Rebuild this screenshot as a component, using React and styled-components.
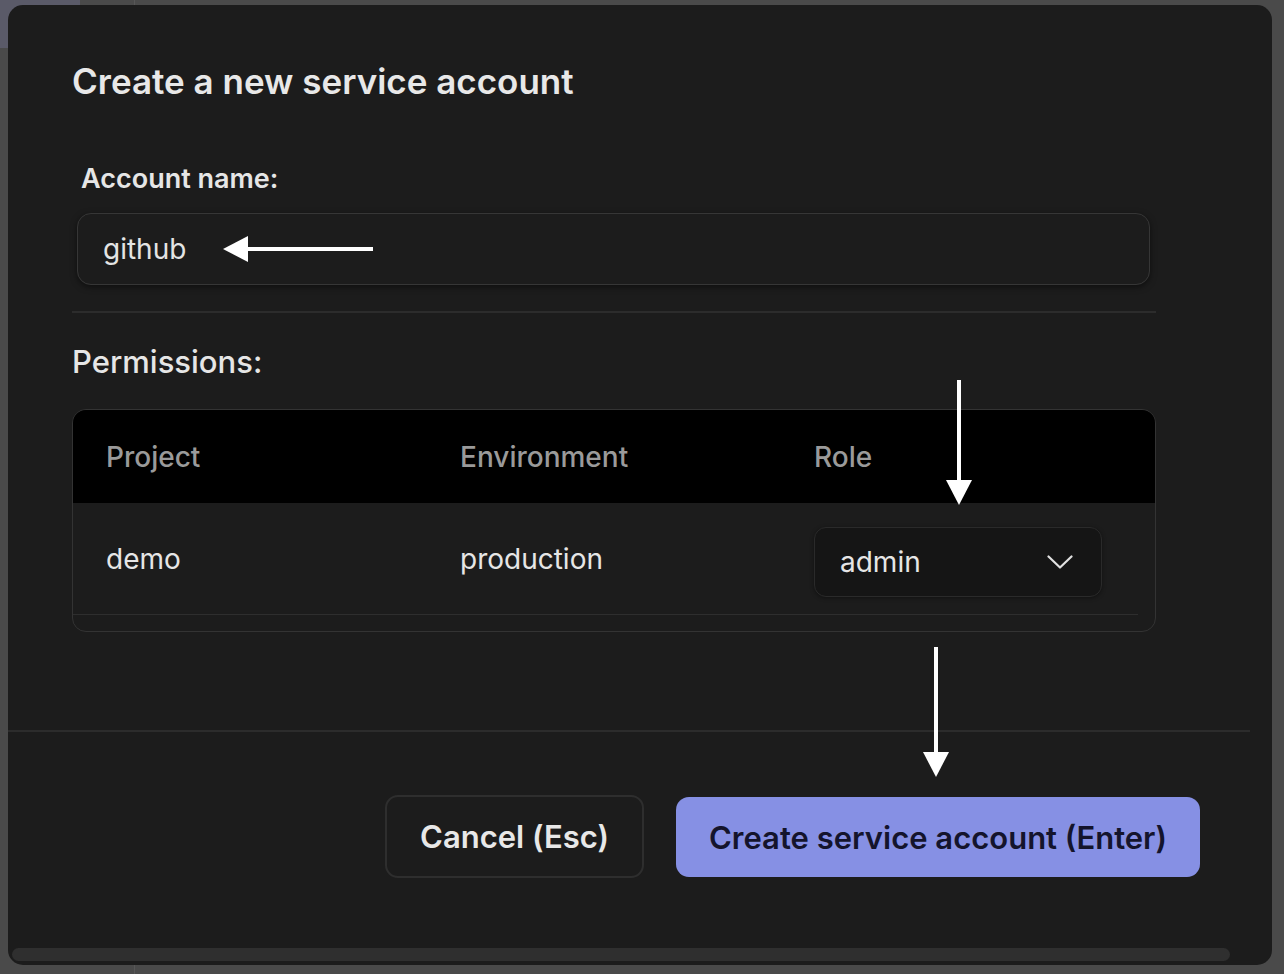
import React from 'react';
import styled, { createGlobalStyle } from 'styled-components';

const GlobalStyle = createGlobalStyle`
  html, body {
    margin: 0;
    padding: 0;
    background: #4a4a4a;
    font-family: Inter, "Noto Sans", sans-serif;
    overflow: hidden;
  }
`;

const Page = styled.div`
  display: flex;
  height: 974px;
  width: 1284px;
`;

const Sidebar = styled.div`
  width: 135px;
  border-right: 1px solid #575757;
  box-sizing: border-box;
`;

const SidebarItem = styled.div`
  width: 80px;
  height: 48px;
  background: #5a5a68;
`;

const Dialog = styled.div`
  position: fixed;
  left: 8px;
  top: 5px;
  width: 1264px;
  height: 960px;
  background: #1c1c1c;
  border-radius: 15px;
  display: flex;
  flex-direction: column;
  overflow: hidden;
`;

const Body = styled.div`
  padding: 56px 0 0 64px;
  width: 1084px;
  height: 669px;
`;

const Title = styled.h2`
  margin: 0;
  font-size: 35px;
  line-height: 40px;
  font-weight: 600;
  color: #e8e8e8;
`;

const Label = styled.div`
  margin: 63px 0 0 9px;
  font-size: 27px;
  line-height: 30px;
  font-weight: 600;
  color: #e6e6e6;
`;

const Input = styled.div`
  margin: 19px 6px 0 5px;
  height: 70px;
  border: 1px solid #363636;
  border-radius: 14px;
  box-shadow: 0 2px 6px rgba(0, 0, 0, 0.5);
  display: flex;
  align-items: center;
  padding-left: 25px;
  font-size: 28px;
  color: #e4e4e4;
`;

const Divider = styled.div`
  margin-top: 26px;
  height: 2px;
  background: #2c2c2c;
`;

const Section = styled.div`
  margin-top: 32px;
  font-size: 31px;
  line-height: 34px;
  font-weight: 500;
  color: #e6e6e6;
`;

const Table = styled.div`
  margin-top: 30px;
  border: 1px solid #333;
  border-radius: 14px;
  overflow: hidden;
  padding-bottom: 16px;
`;

const Row = styled.div`
  display: grid;
  grid-template-columns: 354px 354px 1fr;
  align-items: center;
  height: ${p => (p.$head ? '93px' : '111px')};
  padding-left: 33px;
  background: ${p => (p.$head ? '#000' : 'transparent')};
  border-bottom: ${p => (p.$head ? 'none' : '1px solid #2e2e2e')};
  margin-right: ${p => (p.$head ? '0' : '17px')};
  font-size: 28px;
  font-weight: ${p => (p.$head ? 500 : 400)};
  color: ${p => (p.$head ? '#9a9a9a' : '#e6e6e6')};
`;

const Select = styled.div`
  width: 288px;
  height: 70px;
  box-sizing: border-box;
  margin-top: 6px;
  background: #151515;
  border: 1px solid #2a2a2a;
  border-radius: 12px;
  box-shadow: 0 1px 4px rgba(0, 0, 0, 0.4);
  display: flex;
  align-items: center;
  justify-content: space-between;
  padding: 0 28px 0 25px;
  color: #e6e6e6;
`;

const Footer = styled.div`
  border-top: 2px solid #2c2c2c;
  width: 1242px;
  display: flex;
  justify-content: flex-end;
  padding: 63px 50px 0 0;
  box-sizing: border-box;
  gap: 32px;
  height: 218px;
`;

const Button = styled.div`
  height: ${p => (p.$primary ? '80px' : '83px')};
  margin-top: ${p => (p.$primary ? '2px' : '0')};
  padding: 0 33px;
  box-sizing: border-box;
  display: flex;
  align-items: center;
  border-radius: 13px;
  font-size: 31px;
  font-weight: 600;
  background: ${p => (p.$primary ? '#8690e4' : '#1c1c1c')};
  color: ${p => (p.$primary ? '#14142c' : '#e8e8e8')};
  border: ${p => (p.$primary ? 'none' : '2px solid #2e2e2e')};
`;

const Scrollbar = styled.div`
  margin: 0 42px 0 4px;
  height: 13px;
  border-radius: 7px;
  background: #2f2f2f;
`;

const Arrow = styled.svg`
  position: absolute;
  overflow: visible;
`;

function Chevron() {
  return (
    <svg width="26" height="14" viewBox="0 0 26 14">
      <path d="M1.5 1.5 L13 12.5 L24.5 1.5" fill="none" stroke="#e0e0e0" strokeWidth="2.2" strokeLinecap="round" strokeLinejoin="round" />
    </svg>
  );
}

function LeftArrow({ x, y, len }) {
  return (
    <Arrow style={{ left: x, top: y - 13 }} width={len} height="26">
      <rect x="22" y="11" width={len - 22} height="4" fill="#fff" />
      <polygon points="0,13 25,0 25,26" fill="#fff" />
    </Arrow>
  );
}

function DownArrow({ x, y, len }) {
  return (
    <Arrow style={{ left: x - 13, top: y }} width="26" height={len}>
      <rect x="11" y="0" width="4" height={len - 22} fill="#fff" />
      <polygon points={`0,${len - 25} 26,${len - 25} 13,${len}`} fill="#fff" />
    </Arrow>
  );
}

export default function App() {
  return (
    <>
      <GlobalStyle />
      <Page>
        <Sidebar>
          <SidebarItem />
        </Sidebar>
      </Page>
      <Dialog>
        <Body>
          <Title>Create a new service account</Title>
          <Label>Account name:</Label>
          <Input>github</Input>
          <Divider />
          <Section>Permissions:</Section>
          <Table>
            <Row $head>
              <span>Project</span>
              <span>Environment</span>
              <span>Role</span>
            </Row>
            <Row>
              <span>demo</span>
              <span>production</span>
              <Select>
                <span>admin</span>
                <Chevron />
              </Select>
            </Row>
          </Table>
        </Body>
        <Footer>
          <Button>Cancel (Esc)</Button>
          <Button $primary>Create service account (Enter)</Button>
        </Footer>
        <Scrollbar />
        <LeftArrow x={215} y={244} len={150} />
        <DownArrow x={951} y={375} len={125} />
        <DownArrow x={928} y={642} len={130} />
      </Dialog>
    </>
  );
}
